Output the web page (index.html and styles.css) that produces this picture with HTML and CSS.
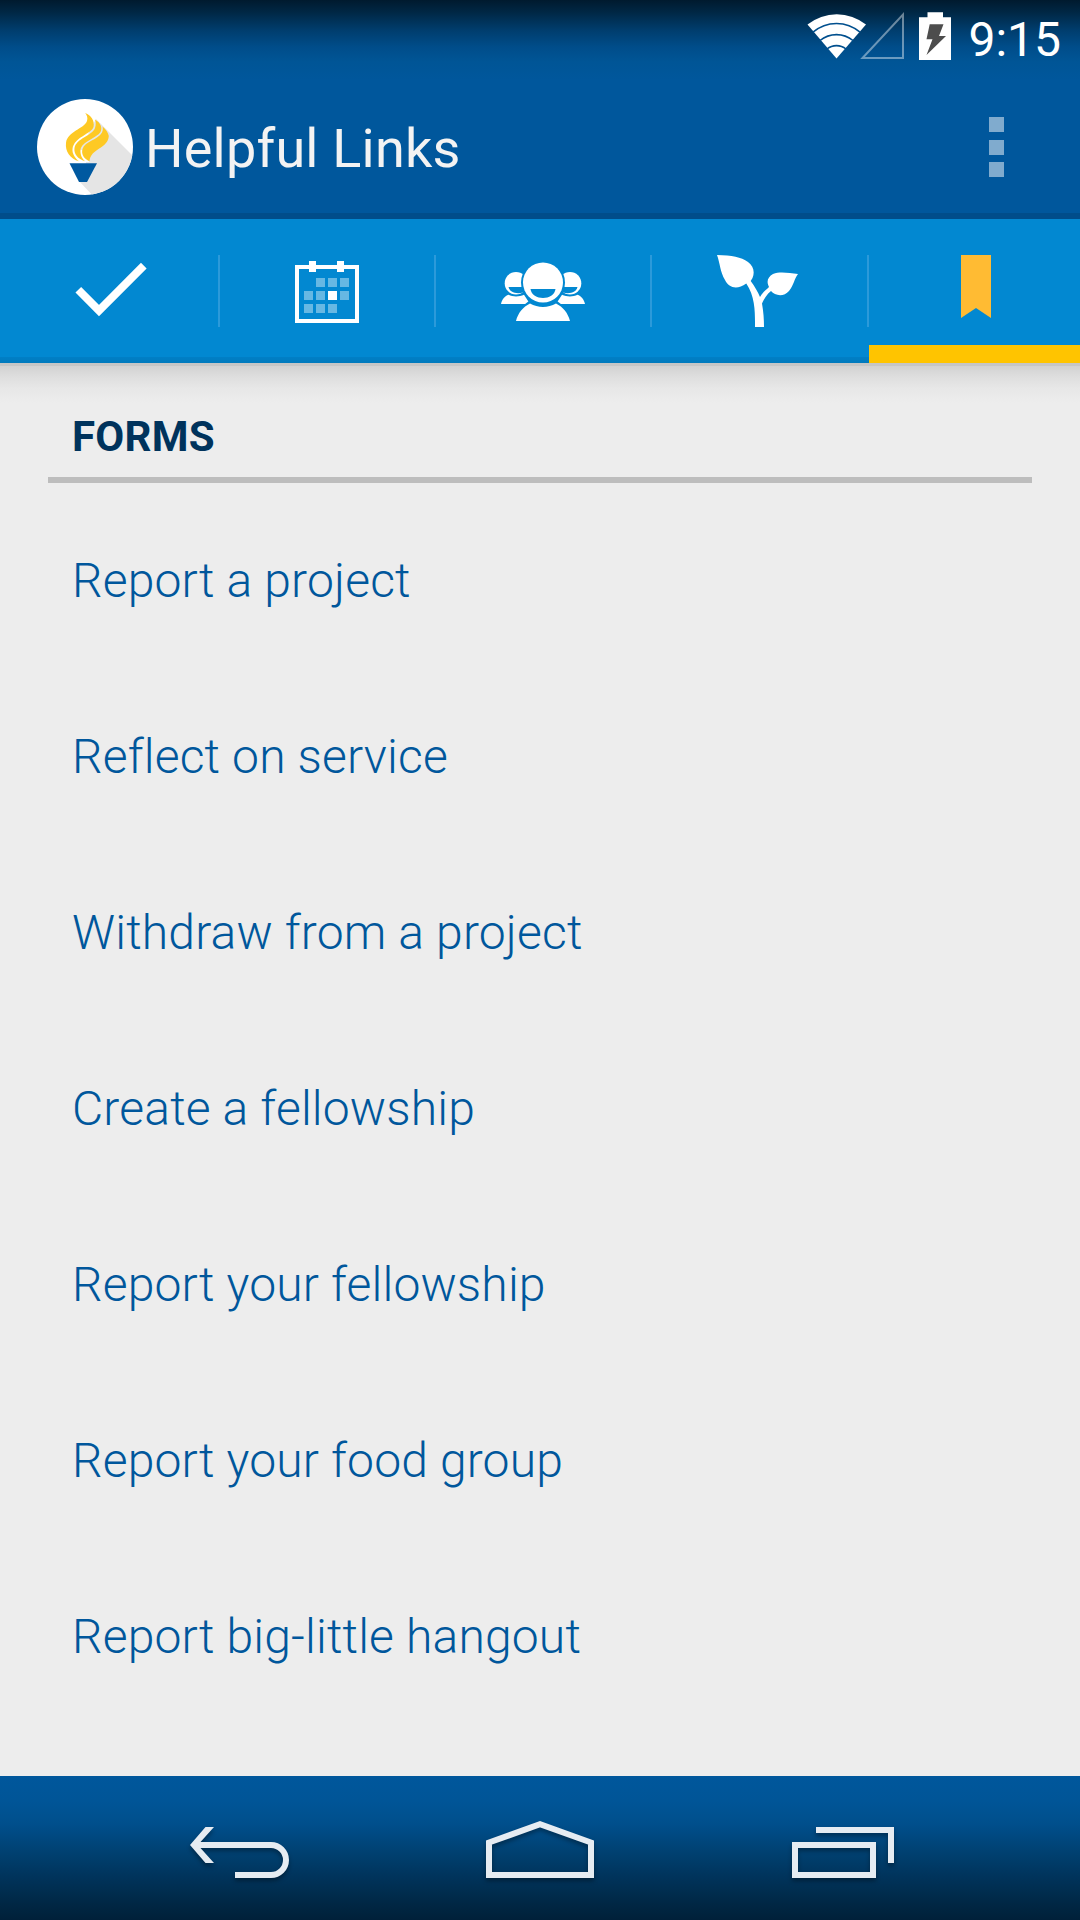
FILE: index.html
```html
<!DOCTYPE html>
<html lang="en">
<head>
<meta charset="utf-8">
<title>Helpful Links</title>
<link rel="stylesheet" href="styles.css">
</head>
<body>
<div class="screen">
  <header class="top">
    <div class="status">
      <svg class="status-icons" width="152" height="75" viewBox="800 0 152 75">
        <path fill="#fff" d="M807.5 24.5A47 47 0 0 1 866 24.5L836.5 58.5Z"/>
        <g fill="none" stroke="#004f8e" stroke-width="1.6">
          <path d="M813 32.200A36 36 0 0 1 860 32.200"/>
          <path d="M820 40.500A26 26 0 0 1 853 40.500"/>
          <path d="M827 49A15 15 0 0 1 846 49"/>
        </g>
        <path fill="none" stroke="#fff" stroke-opacity=".42" stroke-width="2" d="M862.500 58H903V14.500Z"/>
        <path fill="#fff" d="M927.500 12.300H943V17.300H951V60H919V17.300H927.500Z"/>
        <path fill="#4d4d4d" d="M929.700 24.300H943.500L939 36H946L926.500 55L932.500 39.300H926.500Z"/>
      </svg>
      <span class="clock">9:15</span>
    </div>
    <div class="action-bar">
      <svg class="logo" width="96" height="96" viewBox="37 99 96 96">
        <defs><clipPath id="disc"><circle cx="85" cy="147" r="48"/></clipPath></defs>
        <circle cx="85" cy="147" r="48" fill="#fff"/>
        <path clip-path="url(#disc)" fill="#e5e5e5" d="M96 119L140 163V200H97L79 181L87 160L75 160Z"/>
        <path fill="#fff" d="M70 150L78 162H89L86 150Z"/>
        <path fill="#fec924" d="M85.200 113C91 115 95 121 93.500 127C91.500 134 74 137 72.500 149C72 154 75.500 158.500 79 161.300C70 159 65 151 66 143C67.500 131 84 129 87 121C88 118 87 115 85.200 113Z"/>
        <path fill="#fec924" d="M95 119.500C101 123 102.500 128 100.500 132C97 138 82 141 80.500 150C80 155 82.500 159 85 161.300C78 159 73.500 154 74.500 148C76.500 138 92 136 95 128C96 125 96 122 95 119.500Z"/>
        <path fill="#fec924" d="M102.500 126.500C106 129.500 108 132.500 108.800 136C108 149 90.500 148 89.500 161.300C84 159 81 154 82.500 149C85 141 98 140 102 132.500C103 130 103 128 102.500 126.500Z"/>
        <path fill="#0059a0" d="M69.500 163.200H97L87 182H79Z"/>
      </svg>
      <h1 class="title">Helpful Links</h1>
      <div class="overflow"><i></i><i></i><i></i></div>
    </div>
  </header>
  <nav class="tabs">
    <a class="tab">
      <svg width="218" height="144" viewBox="0 219 218 144">
        <path fill="none" stroke="#fff" stroke-width="8" d="M78.300 289.700L99 310.500L143.800 265.700"/>
      </svg>
    </a>
    <a class="tab">
      <svg width="214" height="144" viewBox="220 219 214 144">
        <path fill="none" stroke="#fff" stroke-width="4" d="M297 267H357V321H297Z"/>
        <path fill="#fff" d="M309 261h7v11h-7zM337 261h7v11h-7zM328 291h9v9h-9z"/>
        <path fill="#67b8e3" d="M316 278h9v9h-9zM328 278h9v9h-9zM340 278h9v9h-9zM304 291h9v9h-9zM316 291h9v9h-9zM340 291h9v9h-9zM304 304h9v9h-9zM316 304h9v9h-9zM328 304h9v9h-9z"/>
      </svg>
    </a>
    <a class="tab">
      <svg width="214" height="144" viewBox="436 219 214 144">
        <defs>
          <g id="friend">
            <circle cx="516" cy="283.300" r="11.300" fill="#fff"/>
            <path fill="#0288d1" d="M508.500 287H523V292.500C516 294.500 509.500 292 508.500 287Z"/>
            <path fill="#fff" d="M501 304C502 299 505 296 508.500 294.700C513 297 519 297 524 294.700L530 304Z"/>
          </g>
        </defs>
        <use href="#friend"/>
        <use href="#friend" transform="matrix(-1 0 0 1 1086 0)"/>
        <circle cx="543" cy="282.500" r="22" fill="#0288d1"/>
        <path fill="#0288d1" d="M514 322C518 310 525 303 531 300H555C561 303 568 310 572 322Z"/>
        <path fill="#fff" d="M516 321C518 313 523 307 530 303.500C538 308 548 308 556 303.500C563 307 568 313 570 321Z"/>
        <circle cx="543" cy="282.500" r="20" fill="#fff"/>
        <path fill="#0288d1" d="M530.500 289H555.500C554 301 532 301 530.500 289Z"/>
      </svg>
    </a>
    <a class="tab">
      <svg width="215" height="144" viewBox="652 219 215 144">
        <path fill="#fff" d="M717 255C732 255.500 741 257 748 262C753.500 266 755 272 752.500 278L750.700 281C755 287 758 292 760 297C762 293 766 290 769 287C766 281 768 277 773 274C780 271 789 273 798 274C794 279 794 285 789 291C784 297 775 296 771 291C767 294 764 299 762 303.500C763.500 312 764 319 764 327H755C755 313 755.500 297 746.300 283.500C737 290 729 288 725 280C720 272 720 263 717 255Z"/>
      </svg>
    </a>
    <a class="tab tab-active">
      <svg width="211" height="144" viewBox="869 219 211 144">
        <path fill="#fb3" d="M961 255H991V318L976 308L961 318Z"/>
      </svg>
    </a>
  </nav>
  <main class="content">
    <h2 class="section">FORMS</h2>
    <ul class="links">
      <li>Report a project</li>
      <li>Reflect on service</li>
      <li>Withdraw from a project</li>
      <li>Create a fellowship</li>
      <li>Report your fellowship</li>
      <li>Report your food group</li>
      <li>Report big-little hangout</li>
    </ul>
  </main>
  <footer class="navbar">
    <svg width="300" height="144" viewBox="90 1776 300 144">
      <path fill="#e6ecf2" d="M190 1845L205.500 1827H214L200.500 1842H271A18 18 0 0 1 271 1878H235V1872H271A12 12 0 0 0 271 1848H200.500L214 1863H205.500Z"/>
    </svg>
    <svg width="300" height="144" viewBox="390 1776 300 144">
      <path fill="none" stroke="#e6ecf2" stroke-width="6" d="M489 1842.500L540 1824.200L591 1842.500V1875H489Z"/>
    </svg>
    <svg width="300" height="144" viewBox="690 1776 300 144">
      <path fill="none" stroke="#e6ecf2" stroke-width="6" d="M795 1845H873V1875H795ZM816 1830H891V1863"/>
    </svg>
  </footer>
</div>
</body>
</html>
```
FILE: styles.css
```css
* { box-sizing: border-box; }

body {
  margin: 0;
  font-family: Roboto, sans-serif;
  font-variant-ligatures: none;
}

.screen {
  display: flex;
  flex-direction: column;
  width: 1080px;
  height: 1920px;
  overflow: hidden;
  background: #ededed;
}

.top {
  height: 219px;
  border-bottom: 6px solid #004d8a;
  background: linear-gradient(#001a2e 0, #002744 12px, #003d6d 30px, #004d8a 47px, #005596 62px, #00579c 80px);
}

.status {
  display: flex;
  justify-content: flex-end;
  align-items: center;
  height: 75px;
  padding-right: 19px;
  color: #fff;
}

.clock {
  width: 109px;
  padding-top: 5px;
  text-align: right;
  font-size: 48px;
  line-height: 56px;
}

.action-bar {
  display: flex;
  align-items: center;
  height: 144px;
  padding: 0 76px 0 37px;
}

.title {
  flex: 1;
  margin: 0;
  padding: 4px 0 0 12px;
  color: #f3f3f3;
  font-size: 54px;
  font-weight: 400;
  line-height: 64px;
  letter-spacing: .2px;
}

.overflow {
  display: grid;
  gap: 7.500px;
}

.overflow i {
  width: 15px;
  height: 15px;
  background: #80abce;
}

.tabs {
  display: grid;
  grid-template-columns: 220px 216px 216px 217px 211px;
  height: 144px;
  background: linear-gradient(#0288d1 138px, #017fc6 138px, #017abd);
}

.tab {
  display: flex;
  align-items: center;
}

.tab::after {
  content: "";
  width: 2px;
  height: 72px;
  background: #2c9ada;
}

.tab-active { border-bottom: 18px solid #ffc400; }
.tab-active svg { margin-bottom: -18px; }
.tab-active::after { display: none; }

.content {
  flex: 1;
  padding: 0 48px;
  background: linear-gradient(#c6c6c6 3px, #d2d2d2 3px, #dedede 14px, #e7e7e7 25px, #ededed 40px);
}

.section {
  height: 120px;
  margin: 0;
  padding: 49px 24px 0;
  border-bottom: 6px solid #bdbdbd;
  color: #00335c;
  font-size: 42px;
  font-weight: 700;
  line-height: 50px;
  letter-spacing: .25px;
}

.links {
  margin: 0;
  padding: 10px 24px 0;
  list-style: none;
  color: #00579c;
  font-size: 48px;
  font-weight: 300;
  letter-spacing: .17px;
}

.links li {
  height: 176px;
  line-height: 176px;
}

.navbar {
  display: flex;
  justify-content: center;
  height: 144px;
  background: linear-gradient(#00579c 0, #005597 25px, #004f8c 48px, #004375 72px, #00345c 100px, #002744 128px, #002039 144px);
}

.navbar svg { filter: drop-shadow(0 3px 2px rgba(0, 0, 0, .35)); }
```
